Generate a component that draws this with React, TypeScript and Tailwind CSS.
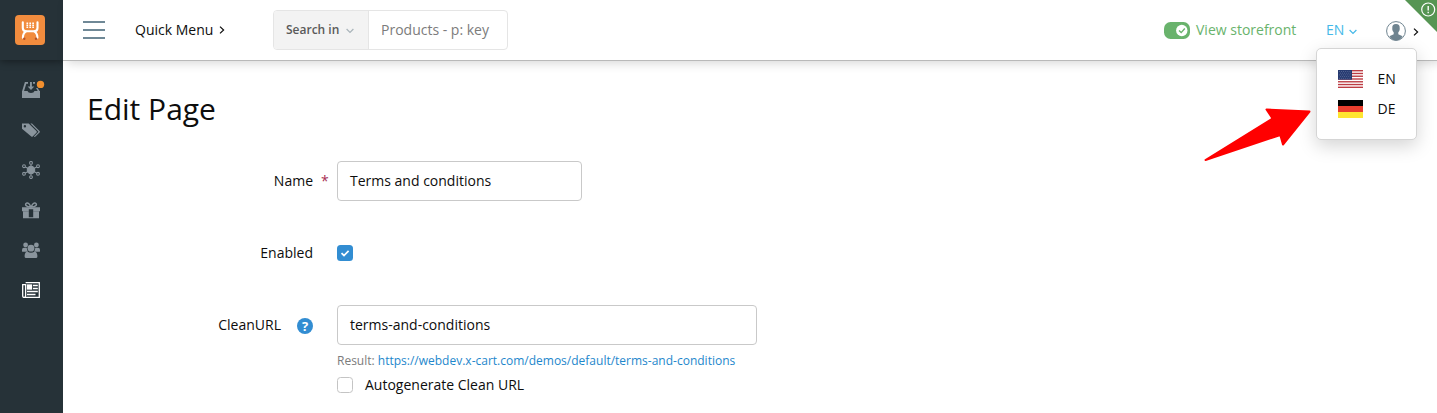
import React from "react";

function Logo() {
  return (
    <svg width="30" height="30" viewBox="0 0 30 30">
      <rect width="30" height="30" rx="4" fill="#f18c3e" />
      <g fill="none" stroke="#fff" strokeWidth="2.100" strokeLinecap="round" strokeLinejoin="round">
        <path d="M7.800 7.300V13Q7.800 16.200 11 16.200H19.300Q22.500 16.200 22.500 13V7.300" />
        <path d="M11 16.400Q7.800 18.500 7.900 22.800M19.300 16.400Q22.500 18.500 22.400 22.800" />
      </g>
      <path d="M12.300 7.500V13M15.200 7.500V13M18.100 7.500V13" stroke="#fff" strokeWidth="1.700" strokeDasharray="1.500 .5" />
      <circle cx="9.300" cy="23.800" r="1.200" fill="#b5542a" />
      <circle cx="21" cy="23.800" r="1.200" fill="#b5542a" />
    </svg>
  );
}

function OrdersIcon() {
  return (
    <svg width="24" height="20" viewBox="0 0 24 20" fill="#8a959d" className="ml-[6px]">
      <path d="M0 11H5.500Q6 13 9 13T12.500 11H18V18H0Z" />
      <path d="M0 11.500L2.900 2H6V3.700H4.300L1.900 11.500Z" />
      <path d="M15.600 8L17.900 11.500H16L14 8Z" />
      <path d="M8 2H9.900V6.500H12.300L9 10L5.600 6.500H8Z" />
      <path d="M11 2H13V3.700H11Z" />
      <circle cx="18.500" cy="4.400" r="3.700" fill="#f28f2e" />
    </svg>
  );
}

function TagsIcon() {
  return (
    <svg width="18" height="18" viewBox="0 0 18 18" fill="#8a959d">
      <path fillRule="evenodd" d="M0 2.500H6.700L14.600 10.200Q15.200 10.900 14.600 11.500L10.700 15.500Q10 16.100 9.300 15.500L0 7.800ZM2.900 4A1.200 1.200 0 1 0 2.900 6.400A1.200 1.200 0 1 0 2.900 4Z" />
      <path d="M8.400 2.500H10L17.500 10Q18.300 10.800 17.500 11.600L13.500 15.600Q12.600 16.300 11.900 15.500L16.100 11.200Q16.600 10.700 16.100 10.200Z" />
    </svg>
  );
}

function NetworkIcon() {
  return (
    <svg width="18" height="18" viewBox="0 0 18 18" fill="none" stroke="#8a959d" strokeWidth="1.100">
      <circle cx="9" cy="9" r="3.700" fill="#8a959d" />
      <path d="M9 3.500V14.500M3.300 6L14.700 12M3.300 12L14.700 6" />
      <circle cx="9" cy="1.900" r="1.400" />
      <circle cx="9" cy="16.100" r="1.400" />
      <circle cx="2" cy="5.200" r="1.400" />
      <circle cx="16" cy="5.200" r="1.400" />
      <circle cx="2" cy="12.800" r="1.400" />
      <circle cx="16" cy="12.800" r="1.400" />
    </svg>
  );
}

function GiftIcon() {
  return (
    <svg width="18" height="18" viewBox="0 0 18 18" fill="#8a959d">
      <path d="M0 6.200H18V10.300H11.200V8.300H6.800V10.300H0Z" />
      <path d="M1 10.300H6.800V17.300H1ZM11.200 10.300H17V17.300H11.200ZM6.800 16.300H11.200V17.300H6.800Z" />
      <path d="M8.800 6C7.500 2.500 5.800 1.500 4.500 2.200C2.700 3.200 3.500 6 8.800 6ZM9.200 6C10.500 2.500 12.200 1.500 13.500 2.200C15.300 3.200 14.500 6 9.200 6Z" fill="none" stroke="#8a959d" strokeWidth="1.500" />
    </svg>
  );
}

function UsersIcon() {
  return (
    <svg width="18" height="18" viewBox="0 0 18 18" fill="#8a959d">
      <circle cx="3.600" cy="3.900" r="2.400" />
      <circle cx="14.400" cy="3.900" r="2.400" />
      <path d="M0 10.500V9Q0 6.700 2 6.700H4.700Q5 9.500 6 10.700H.5ZM18 10.500V9Q18 6.700 16 6.700H13.300Q13 9.500 12 10.700H17.500Z" />
      <circle cx="9" cy="7.200" r="3.400" />
      <path d="M2.600 15.500Q2.600 10.700 5.500 10.700Q9 12.800 12.500 10.700Q15.400 10.700 15.400 15.500Q15.400 17 13.900 17H4.100Q2.600 17 2.600 15.500Z" />
    </svg>
  );
}

function NewsIcon() {
  return (
    <svg width="18" height="18" viewBox="0 0 18 18" fill="none" stroke="#fff" strokeWidth="1.300">
      <path d="M3.600 1.700H17.300V16.300H2.200Q.7 16.300.7 14.800V3.700H3.600V14.800Q3.600 16.300 2.200 16.300" />
      <rect x="5.500" y="4" width="4" height="4" fill="#fff" />
      <path d="M11 4.500H15.800M11 7.500H15.800M5 10.500H15.800M5 13.500H13.500" />
    </svg>
  );
}

const navIcons = [OrdersIcon, TagsIcon, NetworkIcon, GiftIcon, UsersIcon, NewsIcon];

function ChevronDown({ className }: { className: string }) {
  return (
    <svg width="8" height="6" viewBox="0 0 8 6" fill="none" stroke="currentColor" strokeWidth="1.200" className={className}>
      <path d="M.6 1L4 4.500L7.400 1" />
    </svg>
  );
}

function ChevronRight({ className }: { className: string }) {
  return (
    <svg width="6" height="8" viewBox="0 0 6 8" fill="none" stroke="currentColor" strokeWidth="1.200" className={className}>
      <path d="M1 .6L4.600 4L1 7.400" />
    </svg>
  );
}

function Avatar() {
  return (
    <svg width="20" height="20" viewBox="0 0 20 20" className="mt-[2px] ml-[29px]">
      <path d="M10 3C12.600 3 13.900 4.600 13.700 6.900C14 8.700 13.200 10 12.300 11.200V13.200L16.600 15.200Q14 19.500 10 19.500T3.400 15.200L7.700 13.200V11.200C6.800 10 6 8.700 6.300 6.900C6.100 4.600 7.400 3 10 3Z" fill="#6f8490" />
      <circle cx="10" cy="10" r="9.400" fill="none" stroke="#6f8490" />
    </svg>
  );
}

function UsFlag() {
  return (
    <svg width="25" height="18" viewBox="0 0 25 18">
      <rect width="25" height="18" fill="#fff" />
      {[0, 1, 2, 3, 4, 5, 6].map((i) => (
        <rect key={i} y={i * 2.77} width="25" height="1.385" fill="#bd3d44" />
      ))}
      <rect width="14" height="9.700" fill="#263a70" />
      <path d="M1 1.500H13M2 3.200H13M1 4.900H13M2 6.600H13M1 8.300H13" stroke="#7483ab" strokeWidth=".7" strokeDasharray=".8 1.300" />
    </svg>
  );
}

function DeFlag() {
  return (
    <svg width="25" height="18" viewBox="0 0 25 18">
      <rect width="25" height="6" fill="#000" />
      <rect y="6" width="25" height="6" fill="#e93e2e" />
      <rect y="12" width="25" height="6" fill="#ffe531" />
    </svg>
  );
}

export default function App() {
  return (
    <div className="relative flex h-[413px] w-[1437px] overflow-hidden bg-white font-['Open_Sans',sans-serif] text-sm leading-5 text-[#0d0d0d]">
      <aside className="w-[63px] shrink-0 overflow-hidden bg-[#263238]">
        <div className="flex h-[60px] items-center pl-[15px] shadow-[0_1px_8px_rgba(0,0,0,0.45)]">
          <Logo />
        </div>
        <nav className="pt-[10px]">
          {navIcons.map((Icon, i) => (
            <div key={i} className="flex h-10 w-[62px] items-center justify-center">
              <Icon />
            </div>
          ))}
        </nav>
      </aside>

      <div className="flex-1">
        <header className="relative flex h-[61px] items-center border-b border-[#b9b9b9] pl-5 shadow-[4px_2px_10px_rgba(0,0,0,0.16)]">
          <div className="flex w-[22px] flex-col gap-[6px]">
            <i className="h-[2px] bg-[#6f8896]" />
            <i className="h-[2px] bg-[#6f8896]" />
            <i className="h-[2px] bg-[#6f8896]" />
          </div>
          <span className="ml-[30px] w-[78px] whitespace-nowrap">Quick Menu</span>
          <ChevronRight className="ml-[6px]" />
          <div className="ml-[48px] flex h-10 w-[235px] overflow-hidden rounded border border-[#e5e5e5]">
            <div className="flex w-[95px] items-center border-r border-[#e5e5e5] bg-[#f3f3f3] pl-3 text-xs font-semibold text-[#5a5a5a]">
              <span className="w-[54px] whitespace-nowrap">Search in</span>
              <ChevronDown className="ml-[6px] mt-[2px] text-[#a9b4ba]" />
            </div>
            <span className="flex items-center pl-3 text-[#7c7c7c]">Products - p: key</span>
          </div>

          <div className="ml-[656px] flex items-center">
            <svg width="26" height="17" viewBox="0 0 26 17">
              <rect width="26" height="17" rx="6.500" fill="#69b36c" />
              <circle cx="17.800" cy="8.500" r="5.700" fill="#fff" />
              <path d="M15 8.500L17.200 10.600L20.800 6.500" fill="none" stroke="#69b36c" strokeWidth="1.400" />
            </svg>
            <span className="ml-[6px] w-[101px] whitespace-nowrap text-[#69b36c]">View storefront</span>
            <span className="ml-[29px] w-[18px] text-[#45b8e8]">EN</span>
            <ChevronDown className="ml-[5px] mt-[3px] text-[#45b8e8]" />
            <Avatar />
            <ChevronRight className="ml-[7px] mt-[3px]" />
          </div>

          <svg width="32" height="32" viewBox="0 0 32 32" className="absolute right-0 top-0">
            <path d="M0 0H32V32Z" fill="#569553" />
            <circle cx="23.200" cy="9.500" r="6.500" fill="none" stroke="#fff" strokeWidth="1.200" />
            <path d="M23.200 6V10.500M23.200 11.700V13.200" stroke="#fff" strokeWidth="1.400" />
          </svg>

          <div className="absolute right-5 top-12 flex h-[92px] w-[101px] flex-col rounded-[5px] border border-[#d5d5d5] bg-white pl-[21px] pt-[15px] shadow-[0_6px_18px_rgba(0,0,0,0.17)]">
            <div className="flex h-[30px] items-center">
              <UsFlag />
              <span className="ml-[14.5px]">EN</span>
            </div>
            <div className="flex h-[30px] items-center">
              <DeFlag />
              <span className="ml-[14.5px]">DE</span>
            </div>
          </div>
        </header>

        <main>
          <h1 className="pl-6 pt-7 text-[30px] leading-10">Edit Page</h1>
          <div className="mt-8 flex h-10 items-center">
            <span className="w-[250px] text-right">Name</span>
            <span className="ml-2 w-4 text-[#a72f53]">*</span>
            <div className="flex h-10 w-[245px] items-center rounded border border-[#c9c9c9] pl-3">Terms and conditions</div>
          </div>
          <div className="mt-8 flex h-10 items-center">
            <span className="w-[250px] text-right">Enabled</span>
            <svg width="16" height="16" viewBox="0 0 16 16" className="ml-6">
              <rect width="16" height="16" rx="3.500" fill="#328dd2" />
              <path d="M4.500 8.200L7 10.500L11.600 5.800" fill="none" stroke="#fff" strokeWidth="1.700" />
            </svg>
          </div>
          <div className="mt-8 flex h-10 items-center">
            <span className="w-[218px] text-right">CleanURL</span>
            <span className="ml-4 mr-6 mt-[2px] flex h-4 w-4 items-center justify-center rounded-full bg-[#328dd2] text-[13px] font-bold leading-4 text-white">?</span>
            <div className="flex h-10 w-[420px] items-center rounded border border-[#c9c9c9] pl-3">terms-and-conditions</div>
          </div>
          <p className="mt-[6px] whitespace-nowrap pl-[274px] text-xs leading-5 text-[#7c7c7c]">
            Result: <a className="text-[#1e87cc]">https://webdev.x-cart.com/demos/default/terms-and-conditions</a>
          </p>
          <label className="mt-1 flex items-center pl-[274px]">
            <span className="mr-3 h-4 w-4 rounded-[3.5px] border border-[#c4c4c4]" />
            Autogenerate Clean URL
          </label>
        </main>
      </div>

      <svg width="108" height="56" viewBox="1203 107 108 56" className="absolute left-[1203px] top-[107px]">
        <path d="M1205.500 160L1272.500 118.500L1266.500 109.500L1309.500 111.500L1283 144.500L1280.300 135Z" fill="#f00" stroke="#f00" strokeWidth="2" strokeLinejoin="round" />
      </svg>
    </div>
  );
}
